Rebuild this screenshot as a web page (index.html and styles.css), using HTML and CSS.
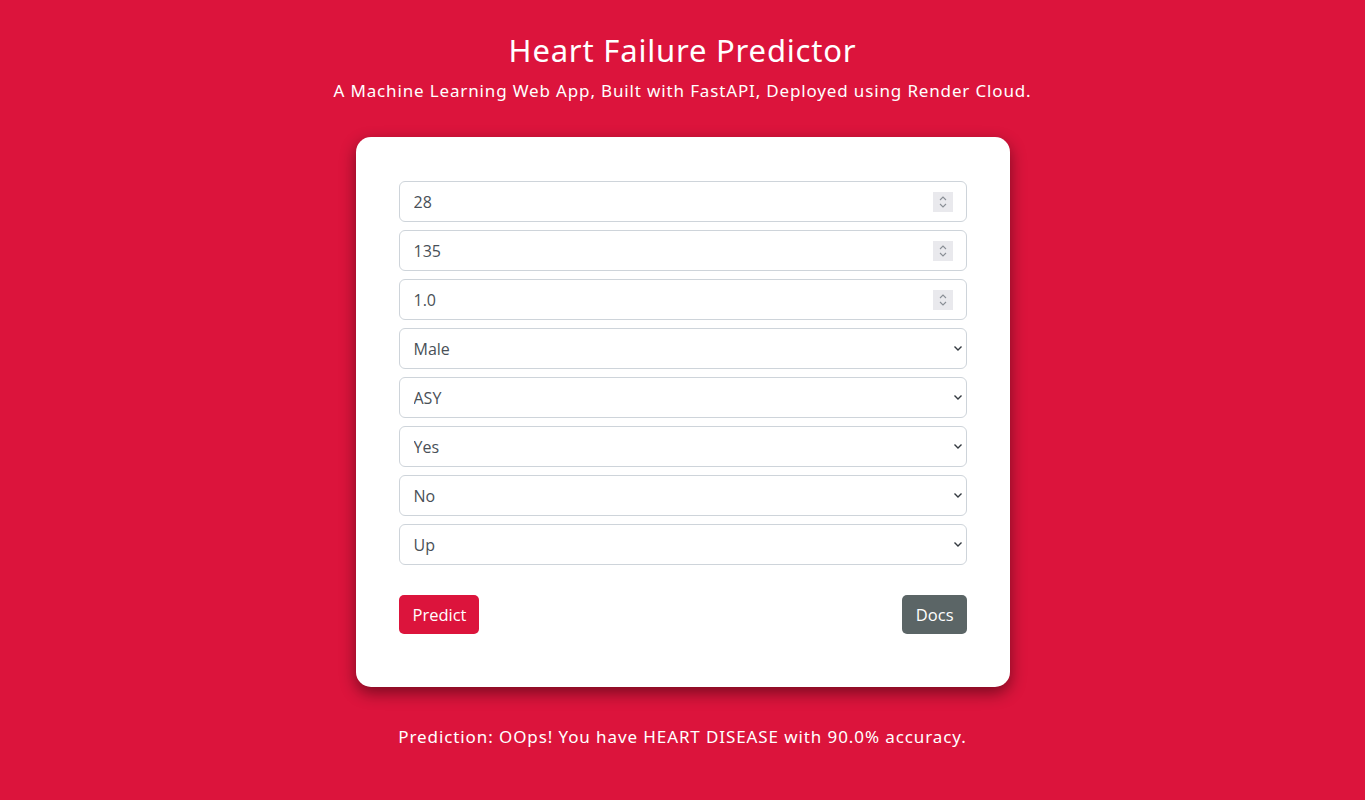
FILE: index.html
```html
<!DOCTYPE html>
<html lang="en">
<head>
<meta charset="utf-8">
<title>Heart Failure Predictor</title>
<link rel="stylesheet" href="styles.css">
</head>
<body>
<main class="page">
  <h1 class="title">Heart Failure Predictor</h1>
  <p class="subtitle">A Machine Learning Web App, Built with FastAPI, Deployed using Render Cloud.</p>

  <form class="card">
    <div class="fields">
      <div class="field">
        <input class="control" type="text" value="28">
        <span class="spin"><svg width="10" height="14" viewBox="0 0 10 14"><path d="M2 5 L5 2 L8 5 M2 9 L5 12 L8 9" fill="none" stroke="#8a8f96" stroke-width="1.1"/></svg></span>
      </div>
      <div class="field">
        <input class="control" type="text" value="135">
        <span class="spin"><svg width="10" height="14" viewBox="0 0 10 14"><path d="M2 5 L5 2 L8 5 M2 9 L5 12 L8 9" fill="none" stroke="#8a8f96" stroke-width="1.1"/></svg></span>
      </div>
      <div class="field">
        <input class="control" type="text" value="1.0">
        <span class="spin"><svg width="10" height="14" viewBox="0 0 10 14"><path d="M2 5 L5 2 L8 5 M2 9 L5 12 L8 9" fill="none" stroke="#8a8f96" stroke-width="1.1"/></svg></span>
      </div>
      <div class="field">
        <select class="control"><option>Male</option><option>Female</option></select>
        <svg class="chev" width="10" height="7" viewBox="0 0 10 7"><path d="M1.5 1.5 L5 5 L8.5 1.5" fill="none" stroke="#343a40" stroke-width="1.4"/></svg>
      </div>
      <div class="field">
        <select class="control"><option>ASY</option><option>ATA</option><option>NAP</option><option>TA</option></select>
        <svg class="chev" width="10" height="7" viewBox="0 0 10 7"><path d="M1.5 1.5 L5 5 L8.5 1.5" fill="none" stroke="#343a40" stroke-width="1.4"/></svg>
      </div>
      <div class="field">
        <select class="control"><option>Yes</option><option>No</option></select>
        <svg class="chev" width="10" height="7" viewBox="0 0 10 7"><path d="M1.5 1.5 L5 5 L8.5 1.5" fill="none" stroke="#343a40" stroke-width="1.4"/></svg>
      </div>
      <div class="field">
        <select class="control"><option>No</option><option>Yes</option></select>
        <svg class="chev" width="10" height="7" viewBox="0 0 10 7"><path d="M1.5 1.5 L5 5 L8.5 1.5" fill="none" stroke="#343a40" stroke-width="1.4"/></svg>
      </div>
      <div class="field">
        <select class="control"><option>Up</option><option>Flat</option><option>Down</option></select>
        <svg class="chev" width="10" height="7" viewBox="0 0 10 7"><path d="M1.5 1.5 L5 5 L8.5 1.5" fill="none" stroke="#343a40" stroke-width="1.4"/></svg>
      </div>
    </div>
    <div class="actions">
      <button type="button" class="btn btn-primary">Predict</button>
      <button type="button" class="btn btn-secondary">Docs</button>
    </div>
  </form>

  <p class="result">Prediction: OOps! You have HEART DISEASE with 90.0% accuracy.</p>
</main>
</body>
</html>
```

FILE: styles.css
```css
* { box-sizing: border-box; }

html, body {
  margin: 0;
  padding: 0;
  background: #dc143c;
  min-height: 100%;
}

body {
  font-family: "Noto Sans", "Open Sans", sans-serif;
  color: #fff;
}

.page {
  display: flex;
  flex-direction: column;
  align-items: center;
  padding-top: 29px;
}

.title {
  margin: 0;
  font-family: "Noto Sans", sans-serif;
  font-weight: 400;
  font-size: 31px;
  line-height: 42px;
  letter-spacing: 0.8px;
}

.subtitle {
  margin: 8px 0 0;
  font-size: 17px;
  line-height: 24px;
  letter-spacing: 0.85px;
}

.card {
  margin-top: 34px;
  width: 654px;
  background: #fff;
  border-radius: 15px;
  padding: 44px 43px 53px;
  box-shadow: 0 6px 16px rgba(0, 0, 0, 0.45);
}

.fields {
  display: flex;
  flex-direction: column;
  gap: 8px;
}

.field {
  display: flex;
  align-items: center;
  height: 41px;
  border: 1px solid #ced4da;
  border-radius: 6px;
  background: #fff;
  padding-right: 13px;
}

.control {
  flex: 1;
  min-width: 0;
  height: 100%;
  border: none;
  outline: none;
  background: transparent;
  padding: 0 0 0 14px;
  font-family: "Open Sans", "Noto Sans", sans-serif;
  font-size: 16px;
  color: #495057;
  appearance: none;
  -webkit-appearance: none;
}

.spin {
  display: flex;
  align-items: center;
  justify-content: center;
  width: 20px;
  height: 20px;
  background: #e9e9ed;
}

.chev { flex: none; margin-right: -10px; }

.actions {
  display: flex;
  justify-content: space-between;
  margin-top: 30px;
}

.btn {
  border: none;
  border-radius: 5px;
  height: 39px;
  padding: 0 13px 0 14px;
  font-family: "Open Sans", "Noto Sans", sans-serif;
  font-size: 16.5px;
  color: #fff;
  cursor: pointer;
}

.btn-primary { background: #dc143c; }
.btn-secondary { background: #5b6566; }

.result {
  margin: 38px 0 0;
  font-size: 17px;
  line-height: 24px;
  letter-spacing: 0.9px;
}
```
